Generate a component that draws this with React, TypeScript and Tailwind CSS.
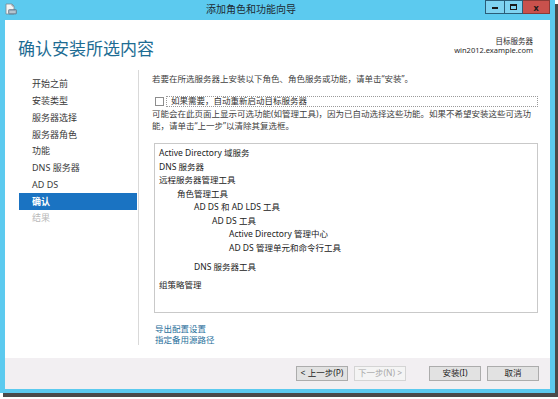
import React from "react";

const font = "font-['Noto_Sans','Noto_Sans_CJK_SC',sans-serif]";

const navItems = [
  "开始之前",
  "安装类型",
  "服务器选择",
  "服务器角色",
  "功能",
  "DNS 服务器",
  "AD DS",
  "确认",
  "结果",
];

const listItems: { t: string; lvl: number; mt?: string }[] = [
  { t: "Active Directory 域服务", lvl: 0 },
  { t: "DNS 服务器", lvl: 0 },
  { t: "远程服务器管理工具", lvl: 0 },
  { t: "角色管理工具", lvl: 1 },
  { t: "AD DS 和 AD LDS 工具", lvl: 2 },
  { t: "AD DS 工具", lvl: 3 },
  { t: "Active Directory 管理中心", lvl: 4 },
  { t: "AD DS 管理单元和命令行工具", lvl: 4 },
  { t: "DNS 服务器工具", lvl: 2, mt: "mt-[6px]" },
  { t: "组策略管理", lvl: 0, mt: "mt-[4.5px]" },
];

const indent = ["pl-0", "pl-[18px]", "pl-[35px]", "pl-[53px]", "pl-[70px]"];

function WinIcon() {
  return (
    <svg width="12" height="12" viewBox="0 0 12 12">
      <path d="M1 1h6l2 2v8H1z" fill="#f4f4f4" stroke="#7a8a96" strokeWidth="0.8" />
      <path d="M7 1v2h2" fill="none" stroke="#7a8a96" strokeWidth="0.8" />
      <rect x="3.5" y="6.5" width="8" height="4.5" rx="1" fill="#8fa4b5" stroke="#5c6f80" strokeWidth="0.6" />
      <rect x="4.5" y="8.5" width="6" height="1" fill="#d9e3ea" />
    </svg>
  );
}

function Btn({ children, disabled }: { children: React.ReactNode; disabled?: boolean }) {
  return (
    <div
      className={
        "w-[52px] h-[15px] flex items-center justify-center text-[8.5px] leading-none border " +
        (disabled
          ? "bg-[#f4f4f4] border-[#d4d4d4] text-[#a8a8a8]"
          : "bg-[#e2e2e2] border-[#acacac] text-[#222]")
      }
    >
      {children}
    </div>
  );
}

export default function App() {
  return (
    <div className={"w-[558px] h-[399px] bg-white overflow-hidden " + font}>
      <div className="w-[555px] h-[393px] bg-[#5ccaef] shadow-[3px_4px_0_#4a4a4a] flex flex-col">
        {/* title bar */}
        <div className="h-[20px] flex items-start relative shrink-0">
          <div className="pl-[5px] pt-[3px]">
            <WinIcon />
          </div>
          <div className="flex-1 text-center text-[10px] leading-[19px] text-[#1e2b33]">
            添加角色和功能向导
          </div>
          <div className="flex h-[14px] mr-[5px]">
            <div className="w-[20px] h-[14px] border border-[#2a5d78] bg-[#7fd3f1] flex items-end justify-center pb-[4px]">
              <div className="w-[6px] h-[2px] bg-[#1b1b1b]" />
            </div>
            <div className="w-[18px] h-[14px] border-y border-r border-[#2a5d78] bg-[#7fd3f1] flex items-center justify-center">
              <div className="w-[7px] h-[6px] border border-[#1b1b1b] border-t-2" />
            </div>
            <div className="w-[27px] h-[14px] bg-[#c9514c] border-y border-r border-[#8a3a36] flex items-center justify-center text-[9px] font-bold leading-none text-[#1a1a1a]">
              x
            </div>
          </div>
        </div>

        {/* body */}
        <div className="flex-1 mx-[5px] mb-[4px] bg-white flex flex-col min-h-0">
          {/* header */}
          <div className="h-[50px] shrink-0 flex justify-between items-start">
            <div className="pl-[13px] pt-[18px] text-[17px] leading-[22px] text-[#1d6c93]">
              确认安装所选内容
            </div>
            <div className="pr-[17px] pt-[17px] text-right text-[7.5px] leading-[9px] text-[#2b2b2b]">
              <div>目标服务器</div>
              <div>win2012.example.com</div>
            </div>
          </div>

          {/* main */}
          <div className="flex-1 flex min-h-0">
            <div className="w-[134px] h-[275px] shrink-0 border-r border-[#d9d9d9] pt-[5.5px] pl-[14px] pr-[1px]">
              {navItems.map((n) => {
                const sel = n === "确认";
                const dim = n === "结果";
                return (
                  <div
                    key={n}
                    className={
                      "h-[16.75px] pl-[13px] flex items-center text-[9px] leading-none " +
                      (sel
                        ? "bg-[#1a73c2] text-white font-bold"
                        : dim
                        ? "text-[#b9b9b9]"
                        : "text-[#3a3a3a]")
                    }
                  >
                    {n}
                  </div>
                );
              })}
            </div>

            <div className="flex-1 pl-[13px] pr-[12px] pt-[3px] flex flex-col">
              <div className="text-[8.5px] leading-[12px] text-[#404040]">
                若要在所选服务器上安装以下角色、角色服务或功能，请单击“安装”。
              </div>
              <div className="mt-[11px] flex items-center h-[11px]">
                <div className="ml-[3px] w-[9px] h-[9px] border border-[#8d8d8d] bg-white shrink-0" />
                <div className="ml-[2px] flex-1 h-[11px] border border-dotted border-[#9a9a9a] pl-[4px] flex items-center text-[8.5px] leading-none text-[#303030]">
                  如果需要，自动重新启动目标服务器
                </div>
              </div>
              <div className="mt-[1px] text-[8.5px] leading-[12px] text-[#404040] whitespace-nowrap">
                可能会在此页面上显示可选功能(如管理工具)，因为已自动选择这些功能。如果不希望安装这些可选功
                <br />
                能，请单击“上一步”以清除其复选框。
              </div>
              <div className="mt-[11px] ml-[2px] h-[170px] border border-[#c9c9c9] pt-[2.5px] pl-[4px]">
                {listItems.map((it, i) => (
                  <div
                    key={i}
                    className={
                      "h-[13.5px] flex items-center text-[8.5px] leading-none text-[#222] " +
                      indent[it.lvl] +
                      " " +
                      (it.mt ?? "")
                    }
                  >
                    {it.t}
                  </div>
                ))}
              </div>
              <div className="mt-[10px] ml-[3px] text-[8.5px] leading-[11px] text-[#1f6f9b]">
                <div>导出配置设置</div>
                <div>指定备用源路径</div>
              </div>
            </div>
          </div>

          {/* footer */}
          <div className="h-[31px] shrink-0 bg-[#f2eff2] flex items-center justify-end pr-[11px]">
            <Btn>&lt; 上一步(P)</Btn>
            <div className="ml-[6px]">
              <Btn disabled>下一步(N) &gt;</Btn>
            </div>
            <div className="ml-[23px]">
              <Btn>安装(I)</Btn>
            </div>
            <div className="ml-[6px]">
              <Btn>取消</Btn>
            </div>
          </div>
        </div>
      </div>
    </div>
  );
}
